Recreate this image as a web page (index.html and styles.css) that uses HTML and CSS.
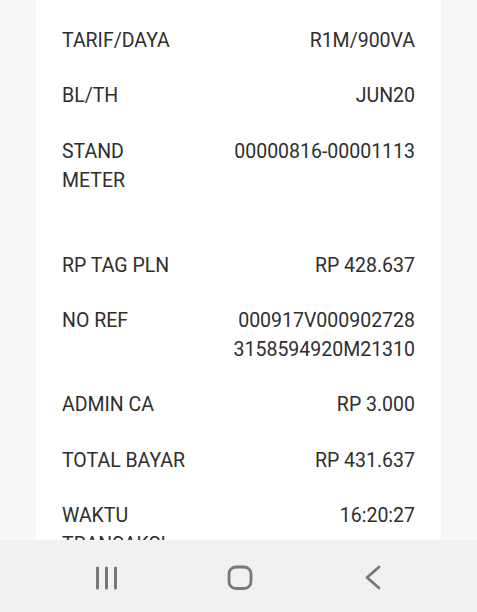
FILE: index.html
```html
<!DOCTYPE html>
<html lang="id">
<head>
<meta charset="utf-8">
<title>Detail Transaksi</title>
<link rel="stylesheet" href="styles.css">
</head>
<body>
<div class="screen">
  <main class="viewport">
    <section class="card">
      <div class="row"><div class="label">TARIF/DAYA</div><div class="value">R1M/900VA</div></div>
      <div class="row"><div class="label">BL/TH</div><div class="value">JUN20</div></div>
      <div class="row row-tall"><div class="label">STAND<br>METER</div><div class="value">00000816-00001113</div></div>
      <div class="row"><div class="label">RP TAG PLN</div><div class="value">RP 428.637</div></div>
      <div class="row"><div class="label">NO REF</div><div class="value">000917V000902728<br>3158594920M21310</div></div>
      <div class="row"><div class="label">ADMIN CA</div><div class="value">RP 3.000</div></div>
      <div class="row"><div class="label">TOTAL BAYAR</div><div class="value">RP 431.637</div></div>
      <div class="row"><div class="label">WAKTU<br>TRANSAKSI</div><div class="value">16:20:27</div></div>
    </section>
  </main>
  <nav class="navbar">
    <button class="nav-btn" aria-label="Recent apps">
      <svg width="24" height="24" viewBox="0 0 24 24"><g stroke="#777" stroke-width="3" stroke-linecap="round"><line x1="2.5" y1="2" x2="2.5" y2="22"/><line x1="11.5" y1="2" x2="11.5" y2="22"/><line x1="20.5" y1="2" x2="20.5" y2="22"/></g></svg>
    </button>
    <button class="nav-btn" aria-label="Home">
      <svg width="26" height="26" viewBox="0 0 26 26"><rect x="2" y="2" width="22" height="21.5" rx="7" fill="none" stroke="#777" stroke-width="2.8"/></svg>
    </button>
    <button class="nav-btn" aria-label="Back">
      <svg width="20" height="26" viewBox="0 0 20 26"><polyline points="16,2 4,12.5 16,23" fill="none" stroke="#777" stroke-width="2.8" stroke-linecap="round" stroke-linejoin="round"/></svg>
    </button>
  </nav>
</div>
</body>
</html>
```
FILE: styles.css
```css
html, body {
  margin: 0;
  padding: 0;
}
body {
  background: #f7f7f7;
  font-family: Roboto, "Liberation Sans", sans-serif;
  color: #2e2e2e;
}
.screen {
  width: 477px;
  height: 612px;
  display: flex;
  flex-direction: column;
  overflow: hidden;
}
.viewport {
  height: 540px;
  flex: none;
  overflow: hidden;
  padding: 0 36px;
}
.card {
  background: #fff;
  min-height: 540px;
  padding: 25.8px 26px 0 26px;
  box-sizing: border-box;
}
.row {
  display: flex;
  justify-content: space-between;
  align-items: flex-start;
  font-size: 19.5px;
  line-height: 29px;
  padding-bottom: 26.4px;
}
.row-tall {
  padding-bottom: 56px;
}
.label {
  text-align: left;
}
.value {
  text-align: right;
}
.navbar {
  flex: 1;
  background: #f1f1f1;
  display: flex;
  align-items: center;
  justify-content: space-between;
  padding: 3px 91px 0 94px;
}
.nav-btn {
  background: none;
  border: 0;
  padding: 0;
  width: 26px;
  height: 26px;
  display: flex;
  align-items: center;
  justify-content: center;
}
```
